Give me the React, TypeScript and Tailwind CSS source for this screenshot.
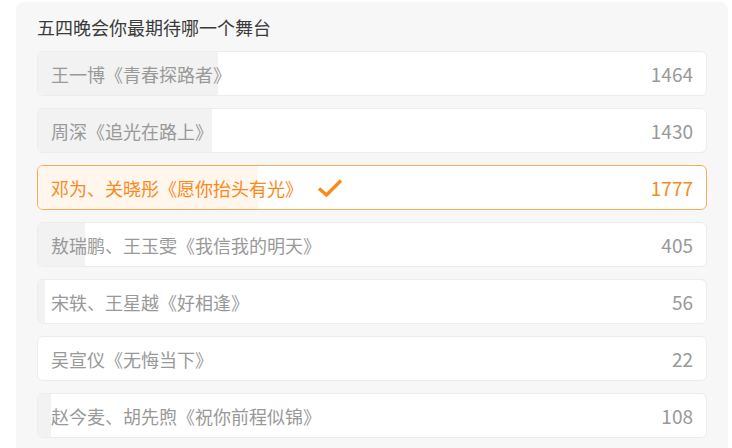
import React from "react";

type Option = {
  label: string;
  votes: number;
  pct: number;
  selected?: boolean;
};

const options: Option[] = [
  { label: "王一博《青春探路者》", votes: 1464, pct: 27 },
  { label: "周深《追光在路上》", votes: 1430, pct: 26 },
  { label: "邓为、关晓彤《愿你抬头有光》", votes: 1777, pct: 33, selected: true },
  { label: "敖瑞鹏、王玉雯《我信我的明天》", votes: 405, pct: 7 },
  { label: "宋轶、王星越《好相逢》", votes: 56, pct: 1 },
  { label: "吴宣仪《无悔当下》", votes: 22, pct: 0 },
  { label: "赵今麦、胡先煦《祝你前程似锦》", votes: 108, pct: 2 },
];

export default function App() {
  return (
    <main
      className="min-h-screen bg-white"
      style={{ fontFamily: '"Noto Sans CJK SC", "Noto Sans", sans-serif' }}
    >
      <div className="ml-4 mr-1 mt-[2px] rounded-lg bg-[#f7f7f7] px-[21px] pb-6 pt-[13px]">
        <h2 className="mb-3 text-[18px] leading-6 text-[#3a3a3a]">五四晚会你最期待哪一个舞台</h2>
        <div className="flex flex-col gap-3">
          {options.map((item) => (
            <OptionRow key={item.label} item={item} />
          ))}
        </div>
      </div>
    </main>
  );
}

function OptionRow({ item }: { item: Option }) {
  const on = item.selected;
  return (
    <div
      className={
        "relative flex h-[45px] items-center overflow-hidden rounded-md border bg-white px-[13px] " +
        (on ? "border-[#ffab55]" : "border-[#ececec]")
      }
    >
      <div
        className={"absolute inset-y-0 left-0 " + (on ? "bg-[#fff6ee]" : "bg-[#f2f2f2]")}
        style={{ width: item.pct + "%" }}
      />
      <span className={"relative text-[18px] leading-6 " + (on ? "text-[#fa8919]" : "text-[#999]")}>
        {item.label}
      </span>
      {on && (
        <svg className="relative ml-[14px]" width="26" height="20" viewBox="0 0 26 20">
          <path d="M2 10.5 L9.5 17 L24 2.5" fill="none" stroke="#fa8919" strokeWidth="3.4" strokeLinejoin="round" />
        </svg>
      )}
      <span className={"relative ml-auto text-[19px] leading-6 " + (on ? "text-[#fa8919]" : "text-[#999]")}>
        {item.votes}
      </span>
    </div>
  );
}
